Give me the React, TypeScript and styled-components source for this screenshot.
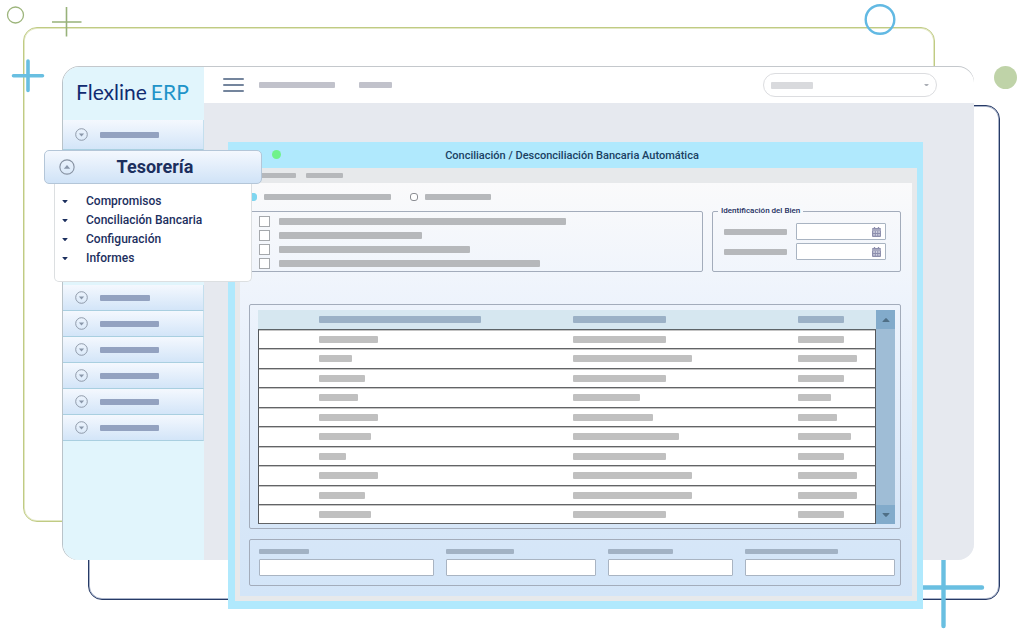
import React from "react";
import styled, { createGlobalStyle, css } from "styled-components";

const font = 'Roboto, "Liberation Sans", sans-serif';

const Global = createGlobalStyle`
  *, *::before, *::after { box-sizing: border-box; }
  body { margin: 0; background: #fff; font-family: ${font}; color: #1c2f5e; }
  button, input, select { font: inherit; color: inherit; margin: 0; }
  button { padding: 0; border: 0; background: none; cursor: pointer; }
`;

const Stage = styled.div`
  position: relative;
  padding: 67px 50px 73px 63px;
  overflow: hidden;
`;

/* Decoration around the application window */
const Outline = styled.div<{ $tone: "green" | "navy" }>`
  position: absolute;
  border-radius: 14px;
  ${(p) =>
    p.$tone === "green"
      ? css`
          inset: 27px 89px 111px 23px;
          border: 1px solid #c0cb83;
          box-shadow: inset 0 0 0 1px #e3e8c6;
        `
      : css`
          inset: 105px 24px 33px 88px;
          border: 1px solid #263a66;
          box-shadow: inset 0 0 0 1px #a9b3c9;
        `}
`;

const Ornament = styled.svg<{ $top: number; $left?: number; $right?: number; $size: number }>`
  position: absolute;
  top: ${(p) => p.$top}px;
  ${(p) => (p.$left !== undefined ? `left: ${p.$left}px;` : `right: ${p.$right}px;`)}
  width: ${(p) => p.$size}px;
  height: ${(p) => p.$size}px;
  overflow: visible;
  fill: none;
`;

const Shell = styled.div`
  position: relative;
  display: flex;
  border-radius: 16px;
  background: #fff;
  box-shadow: 0 -1px 0 #c4c8cc, -1px 0 0 #b9c3c9;
`;

const Sidebar = styled.nav`
  flex: none;
  width: 141px;
  background: #e1f5fc;
  border-radius: 16px 0 0 16px;
`;

const Logo = styled.div`
  height: 53px;
  padding: 11px 0 0 13px;
  font-family: Lato, "Liberation Sans", sans-serif;
  font-size: 21px;
  line-height: 28px;
  color: #102b71;
  white-space: nowrap;
  display: flex;
  gap: 4px;
`;

const LogoSuffix = styled.span`
  color: #2093c8;
`;

const NavItem = styled.button<{ $first?: boolean }>`
  display: flex;
  align-items: center;
  gap: 12px;
  width: 100%;
  height: ${(p) => (p.$first ? 30 : 26)}px;
  padding-left: 12px;
  border-bottom: 1px solid #a9cfe0;
  border-right: 1px solid #c4dfee;
  background: linear-gradient(#f4f8fe, #d3e5f8);
`;

const Bar = styled.span<{ $w: number; $h?: number; $c?: string }>`
  display: block;
  flex: none;
  width: ${(p) => p.$w}px;
  height: ${(p) => p.$h ?? 6}px;
  border-radius: 1px;
  background: ${(p) => p.$c ?? "#b6b8bb"};
`;

const Group = styled.section`
  position: relative;
  z-index: 2;
  width: 218px;
  height: 135px;
  margin-left: -19px;
`;

const GroupHeader = styled.button`
  display: flex;
  align-items: center;
  width: 100%;
  height: 34px;
  padding-left: 14px;
  border: 1px solid #b4c6d8;
  border-radius: 5px;
  background: linear-gradient(#f4f8fe, #d0e3f7);
`;

const GroupTitle = styled.span`
  flex: 1;
  padding-right: 26px;
  font-size: 18px;
  line-height: 22px;
  font-weight: 700;
  text-align: center;
`;

const GroupList = styled.ul`
  list-style: none;
  margin: 0 10px;
  padding: 8px 0 13px;
  border: 1px solid #dcdfe1;
  border-top: 0;
  border-radius: 0 0 5px 5px;
  background: #fff;
`;

const GroupLink = styled.a`
  display: flex;
  align-items: center;
  gap: 18px;
  padding-left: 7px;
  font-size: 12px;
  line-height: 19px;
  font-weight: 500;
  color: inherit;
  text-decoration: none;
`;

const Main = styled.div`
  flex: 1;
  min-width: 0;
`;

const TopBar = styled.header`
  display: flex;
  align-items: center;
  height: 36px;
  padding: 0 37px 0 19px;
`;

const MenuButton = styled.button`
  display: grid;
  gap: 4px;
  width: 21px;
  margin-right: 15px;
`;

const MenuLine = styled.span`
  height: 2px;
  border-radius: 1px;
  background: #74859d;
`;

const TopLinks = styled.div`
  display: flex;
  flex: 1;
  gap: 24px;
`;

const Picker = styled.label`
  position: relative;
  display: block;
`;

const PickerSelect = styled.select`
  appearance: none;
  display: block;
  width: 174px;
  height: 24px;
  border: 1px solid #dcdde0;
  border-radius: 12px;
  background: #fff;
`;

const PickerContent = styled.span`
  position: absolute;
  inset: 0;
  display: flex;
  align-items: center;
  justify-content: space-between;
  padding: 0 8px;
  pointer-events: none;
`;

const Workspace = styled.main`
  display: flow-root;
  padding: 39px 51px 0 24px;
  background: #e6e9ef;
  border-radius: 0 0 16px 0;
`;

const Dialog = styled.section`
  position: relative;
  margin-bottom: -49px;
  padding: 0 6px 8px 7px;
  background: #b0e9fd;
`;

const DialogTitle = styled.h1`
  display: flex;
  align-items: center;
  justify-content: center;
  position: relative;
  height: 26px;
  margin: 0;
  padding: 2px 8px 0 0;
  font-size: 11px;
  line-height: 16px;
  font-weight: 500;
  color: #1a4163;
`;

const StatusDot = styled.span`
  position: absolute;
  left: 37px;
  top: 8px;
  width: 9px;
  height: 9px;
  border-radius: 50%;
  background: #70f28b;
`;

const DialogBody = styled.div`
  padding: 0 5px 5px;
  background: #e7e9eb;
`;

const MenuStrip = styled.div`
  display: flex;
  align-items: center;
  gap: 10px;
  height: 15px;
  padding-left: 17px;
`;

const Form = styled.form`
  padding: 7px 11px 10px 9px;
  background: linear-gradient(#fafafb, #edf3fc 30%, #d8e7f8 78%, #d3e5f8);
`;

const ModeRow = styled.div`
  display: flex;
  align-items: center;
  gap: 19px;
  height: 14px;
`;

const Choice = styled.label`
  display: flex;
  align-items: center;
  gap: 7px;
`;

const Radio = styled.input`
  appearance: none;
  width: 8px;
  height: 8px;
  border: 1px solid #8b8d93;
  border-radius: 3px;
  background: #fff;
  &:checked {
    border-color: #7fd6f0;
    background: #7fd6f0;
  }
`;

const FilterRow = styled.div`
  display: flex;
  gap: 9px;
  margin-top: 7px;
`;

const Panel = styled.div`
  border: 1px solid #a3acbb;
  border-radius: 2px;
`;

const CheckPanel = styled(Panel)`
  flex: 1;
  display: flex;
  flex-direction: column;
  justify-content: space-between;
  height: 61px;
  padding: 4px 9px 2px;
`;

const CheckLabel = styled.label`
  display: flex;
  align-items: center;
  gap: 9px;
`;

const Check = styled.input`
  appearance: none;
  width: 11px;
  height: 11px;
  border: 1px solid #a5a8ac;
  background: #fff;
`;

const DatePanel = styled.fieldset`
  flex: none;
  position: relative;
  width: 189px;
  height: 61px;
  margin: 0;
  padding: 11px 14px 0 11px;
  border: 1px solid #a3acbb;
  border-radius: 2px;
  display: grid;
  align-content: start;
  gap: 3px;
`;

const DateLegend = styled.legend`
  position: absolute;
  top: -7px;
  left: 5px;
  padding: 0 3px;
  background: #f7f9fc;
  font-size: 8px;
  line-height: 12px;
  font-weight: 500;
`;

const DateField = styled.label`
  position: relative;
  display: flex;
  align-items: center;
  justify-content: space-between;
  svg {
    position: absolute;
    right: 5px;
  }
`;

const TextBox = styled.input<{ $w?: string }>`
  display: block;
  width: ${(p) => p.$w ?? "100%"};
  height: 17px;
  padding: 0 4px;
  border: 1px solid #a9b4c2;
  border-radius: 1px;
  background: #fff;
  font-size: 10px;
`;

const GridPanel = styled(Panel)`
  display: flex;
  margin-top: 32px;
  padding: 5px 5px 4px 8px;
`;

const Grid = styled.table`
  flex: 1;
  table-layout: fixed;
  border-collapse: separate;
  border-spacing: 0;
  th,
  td {
    height: 19px;
    padding: 0;
    text-align: left;
  }
  th {
    height: 20px;
    background: #d6e7f0;
    border-bottom: 1px solid #5d6468;
  }
  td {
    background: #fff;
    border-bottom: 1px solid #626466;
    box-shadow: 0 1px 0 #c4c4c4 inset;
  }
  tbody tr:nth-child(even) td {
    height: 20px;
  }
  tbody tr:last-child td {
    height: 19px;
  }
  th:first-child,
  td:first-child {
    padding-left: 61px;
  }
  td:first-child {
    border-left: 1px solid #55585c;
    padding-left: 60px;
  }
  td:last-child {
    border-right: 1px solid #55585c;
  }
`;

const Scroller = styled.div`
  display: flex;
  flex-direction: column;
  justify-content: space-between;
  width: 19px;
  background: #9fbdd6;
`;

const ScrollButton = styled.button`
  display: grid;
  place-items: center;
  height: 19px;
  background: #82abcb;
`;

const Totals = styled(Panel)`
  display: flex;
  gap: 12px;
  margin-top: 10px;
  padding: 9px 5px 9px 9px;
`;

const Total = styled.label<{ $grow: number }>`
  flex: ${(p) => p.$grow} 1 0;
  min-width: 0;
  display: grid;
  gap: 5px;
`;

const Caret = ({ up, w = 6, color = "#8a93a3" }: { up?: boolean; w?: number; color?: string }) => (
  <svg width={w} height={w / 2} viewBox="0 0 8 4" aria-hidden="true">
    <path d={up ? "M1 4h6q1 0 .3-.7L4.700 .4q-.7-.7-1.400 0L.7 3.300Q0 4 1 4z" : "M1 0h6q1 0 .3.7L4.700 3.600q-.7.7-1.400 0L.7.7Q0 0 1 0z"} fill={color} />
  </svg>
);

const RoundCaret = ({ up, size = 13 }: { up?: boolean; size?: number }) => (
  <svg width={size} height={size} viewBox="0 0 13 13" fill="none" aria-hidden="true">
    <circle cx="6.5" cy="6.500" r="5.800" stroke="#8792a2" strokeWidth="0.900" />
    <path d={up ? "M3.900 7.900h5.200L6.500 4.900z" : "M3.900 5.500h5.200L6.500 8.500z"} fill="#8a97aa" />
  </svg>
);

const Calendar = () => (
  <svg width="9" height="10" viewBox="0 0 9 10" aria-hidden="true">
    <rect y="1" width="9" height="9" rx="1" fill="#8d8fad" />
    <path d="M2.500 0v2M6.500 0v2" stroke="#8d8fad" strokeWidth="1.300" />
    <path d="M0 3h9" stroke="#e4e5ef" strokeWidth="0.600" />
    <path d="M1.300 5h1.500M3.800 5h1.500M6.300 5h1.500M1.300 7.800h1.500M3.800 7.800h1.500M6.300 7.800h1.500" stroke="#e4e5ef" strokeWidth="1.300" />
  </svg>
);

const links = ["Compromisos", "Conciliación Bancaria", "Configuración", "Informes"];
const navBars = [50, 59, 59, 59, 59, 59];
const checks = [287, 143, 191, 261];
const rows = [
  [59, 93, 46],
  [33, 119, 59],
  [46, 93, 46],
  [39, 67, 33],
  [59, 80, 39],
  [52, 106, 53],
  [27, 93, 46],
  [59, 119, 59],
  [46, 119, 59],
  [52, 93, 46],
];
const totals = [
  [175, 50],
  [150, 68],
  [125, 65],
  [150, 93],
];

export default function App() {
  return (
    <>
      <Global />
      <Stage>
        <Outline $tone="green" />
        <Outline $tone="navy" />
        <Ornament $top={6} $left={7} $size={18} viewBox="0 0 18 18">
          <circle cx="8.500" cy="9" r="8" stroke="#9db57c" strokeWidth="1.300" />
        </Ornament>
        <Ornament $top={7} $left={52} $size={30} viewBox="0 0 30 30">
          <path d="M0 15h29.500M14.500 0v29.500" stroke="#98b27a" strokeWidth="1.600" />
        </Ornament>
        <Ornament $top={60} $left={12} $size={32} viewBox="0 0 32 32">
          <path d="M1.500 15.700h29M16 1v29.500" stroke="#69bfe1" strokeWidth="3.600" strokeLinecap="round" />
        </Ornament>
        <Ornament $top={4} $right={128} $size={31} viewBox="0 0 31 31">
          <circle cx="15" cy="15.500" r="14.300" stroke="#62b9e3" strokeWidth="2.400" />
        </Ornament>
        <Ornament $top={66} $right={7} $size={23} viewBox="0 0 23 23">
          <circle cx="11.500" cy="11.500" r="11.500" fill="#bfd3a8" />
        </Ornament>
        <Ornament $top={546} $right={39} $size={82} viewBox="0 0 82 82">
          <path d="M2 41.500h77M40.500 2v78" stroke="#69bfe1" strokeWidth="4.400" strokeLinecap="round" />
        </Ornament>

        <Shell>
          <Sidebar>
            <Logo>
              <span>Flexline</span>
              <LogoSuffix>ERP</LogoSuffix>
            </Logo>
            <NavItem $first type="button">
              <RoundCaret />
              <Bar $w={59} $c="#93a2c0" />
            </NavItem>
            <Group>
              <GroupHeader type="button">
                <RoundCaret up size={16} />
                <GroupTitle>Tesorería</GroupTitle>
              </GroupHeader>
              <GroupList>
                {links.map((text) => (
                  <li key={text}>
                    <GroupLink href="#">
                      <Caret color="#1c2f5e" />
                      {text}
                    </GroupLink>
                  </li>
                ))}
              </GroupList>
            </Group>
            {navBars.map((w, i) => (
              <NavItem key={i} type="button">
                <RoundCaret />
                <Bar $w={w} $c="#93a2c0" />
              </NavItem>
            ))}
          </Sidebar>

          <Main>
            <TopBar>
              <MenuButton type="button">
                <MenuLine />
                <MenuLine />
                <MenuLine />
              </MenuButton>
              <TopLinks>
                <Bar $w={76} $c="#c1c2cb" />
                <Bar $w={33} $c="#c1c2cb" />
              </TopLinks>
              <Picker>
                <PickerSelect />
                <PickerContent>
                  <Bar $w={42} $h={7} $c="#d9dadd" />
                  <Caret w={5} color="#aaaeb5" />
                </PickerContent>
              </Picker>
            </TopBar>

            <Workspace>
              <Dialog>
                <DialogTitle>
                  <StatusDot />
                  Conciliación / Desconciliación Bancaria Automática
                </DialogTitle>
                <DialogBody>
                  <MenuStrip>
                    <Bar $w={39} $h={5} />
                    <Bar $w={37} $h={5} />
                  </MenuStrip>
                  <Form>
                    <ModeRow>
                      <Choice>
                        <Radio type="radio" name="mode" defaultChecked />
                        <Bar $w={127} />
                      </Choice>
                      <Choice>
                        <Radio type="radio" name="mode" />
                        <Bar $w={66} />
                      </Choice>
                    </ModeRow>
                    <FilterRow>
                      <CheckPanel>
                        {checks.map((w) => (
                          <CheckLabel key={w}>
                            <Check type="checkbox" />
                            <Bar $w={w} $h={7} />
                          </CheckLabel>
                        ))}
                      </CheckPanel>
                      <DatePanel>
                        <DateLegend>Identificación del Bien</DateLegend>
                        {[0, 1].map((i) => (
                          <DateField key={i}>
                            <Bar $w={63} />
                            <TextBox $w="90px" type="text" />
                            <Calendar />
                          </DateField>
                        ))}
                      </DatePanel>
                    </FilterRow>
                    <GridPanel>
                      <Grid>
                        <colgroup>
                          <col />
                          <col style={{ width: 225 }} />
                          <col style={{ width: 78 }} />
                        </colgroup>
                        <thead>
                          <tr>
                            {[162, 93, 46].map((w) => (
                              <th key={w} scope="col">
                                <Bar $w={w} $h={7} $c="#9bb1c6" />
                              </th>
                            ))}
                          </tr>
                        </thead>
                        <tbody>
                          {rows.map((row, r) => (
                            <tr key={r}>
                              {row.map((w, c) => (
                                <td key={c}>
                                  <Bar $w={w} $h={7} $c="#c0c0c0" />
                                </td>
                              ))}
                            </tr>
                          ))}
                        </tbody>
                      </Grid>
                      <Scroller>
                        <ScrollButton type="button">
                          <Caret up w={8} color="#4f6f86" />
                        </ScrollButton>
                        <ScrollButton type="button">
                          <Caret w={8} color="#4f6f86" />
                        </ScrollButton>
                      </Scroller>
                    </GridPanel>
                    <Totals>
                      {totals.map(([grow, w], i) => (
                        <Total key={i} $grow={grow}>
                          <Bar $w={w} $h={5} $c="#a2b2c4" />
                          <TextBox type="text" />
                        </Total>
                      ))}
                    </Totals>
                  </Form>
                </DialogBody>
              </Dialog>
            </Workspace>
          </Main>
        </Shell>
      </Stage>
    </>
  );
}
